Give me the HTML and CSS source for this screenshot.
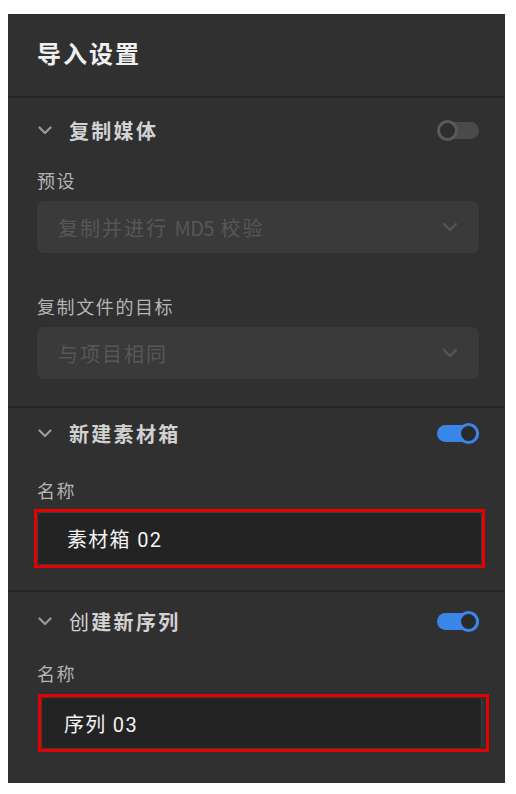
FILE: index.html
```html
<!DOCTYPE html>
<html lang="zh-CN">
<head>
<meta charset="utf-8">
<title>导入设置</title>
<link rel="stylesheet" href="styles.css">
</head>
<body>
<div class="panel">
  <div class="header">导入设置</div>

  <section class="section s1">
    <div class="title-row">
      <svg class="chev" width="14" height="9" viewBox="0 0 14 9"><polyline points="1.5,1.5 7,7 12.5,1.5" fill="none" stroke="#9a9a9a" stroke-width="2.2" stroke-linecap="round" stroke-linejoin="round"/></svg>
      <span class="title">复制媒体</span>
      <span class="toggle off"><span class="knob"></span></span>
    </div>
    <div class="label l1">预设</div>
    <div class="select">
      <span class="sel-text">复制并进行 <span class="latin">MD5</span> 校验</span>
      <svg class="sel-chev" width="16" height="10" viewBox="0 0 16 10"><polyline points="2,2 8,8 14,2" fill="none" stroke="#555555" stroke-width="2.4" stroke-linecap="round" stroke-linejoin="round"/></svg>
    </div>
    <div class="label l2">复制文件的目标</div>
    <div class="select">
      <span class="sel-text">与项目相同</span>
      <svg class="sel-chev" width="16" height="10" viewBox="0 0 16 10"><polyline points="2,2 8,8 14,2" fill="none" stroke="#555555" stroke-width="2.4" stroke-linecap="round" stroke-linejoin="round"/></svg>
    </div>
  </section>

  <section class="section s2">
    <div class="title-row">
      <svg class="chev" width="14" height="9" viewBox="0 0 14 9"><polyline points="1.5,1.5 7,7 12.5,1.5" fill="none" stroke="#9a9a9a" stroke-width="2.2" stroke-linecap="round" stroke-linejoin="round"/></svg>
      <span class="title">新建素材箱</span>
      <span class="toggle on"><span class="knob"></span></span>
    </div>
    <div class="label l3">名称</div>
    <div class="highlight h1">
      <div class="input">素材箱 02</div>
    </div>
  </section>

  <section class="section s3">
    <div class="title-row">
      <svg class="chev" width="14" height="9" viewBox="0 0 14 9"><polyline points="1.5,1.5 7,7 12.5,1.5" fill="none" stroke="#9a9a9a" stroke-width="2.2" stroke-linecap="round" stroke-linejoin="round"/></svg>
      <span class="title"><span class="light">创</span>建新序列</span>
      <span class="toggle on"><span class="knob"></span></span>
    </div>
    <div class="label l4">名称</div>
    <div class="highlight h2">
      <div class="input">序列 03</div>
    </div>
  </section>
</div>
</body>
</html>
```

FILE: styles.css
```css
* { box-sizing: border-box; }
html, body { background: #ffffff; }
body {
  margin: 0;
  padding: 14px 11px 11px 8px;
  font-family: "Noto Sans CJK SC", "Noto Sans", "Liberation Sans", sans-serif;
}
.panel {
  width: 497px;
  height: 769px;
  background: #303030;
  display: flex;
  flex-direction: column;
  overflow: hidden;
}
.header {
  height: 84px;
  padding-left: 29px;
  padding-bottom: 5px;
  display: flex;
  align-items: center;
  color: #f0f0f0;
  font-size: 24px;
  font-weight: 700;
  letter-spacing: 2px;
  border-bottom: 2px solid #252525;
}
.section {
  padding: 0 26px 0 29px;
  display: flex;
  flex-direction: column;
  border-bottom: 2px solid #262626;
}
.s1 { padding-top: 16px; padding-bottom: 27px; }
.s2 { padding-top: 9px; padding-bottom: 22px; }
.s3 { padding-top: 13px; border-bottom: none; flex: 1; }

.title-row {
  height: 32px;
  display: flex;
  align-items: center;
}
.chev { margin-left: 1px; margin-right: 17px; flex: none; }
.title {
  color: #d2d2d2;
  font-size: 20px;
  font-weight: 700;
  letter-spacing: 2.3px;
  flex: 1;
}
.light { font-weight: 400; }

.toggle {
  position: relative;
  width: 42px;
  height: 21px;
  flex: none;
}
.toggle::before {
  content: "";
  position: absolute;
  left: 3px;
  right: 0;
  top: 2px;
  bottom: 2px;
  border-radius: 9px;
}
.toggle .knob {
  position: absolute;
  top: 0;
  width: 21px;
  height: 21px;
  border-radius: 50%;
  background: #2e2e2e;
}
.toggle.off::before { background: #4a4a4a; left: 8px; }
.toggle.off .knob { left: 0; border: 3px solid #5a5a5a; }
.toggle.on::before { background: #3a86e8; left: 0; }
.toggle.on .knob { right: 0; border: 3px solid #3a86e8; background: #2a2a2a; }

.label {
  color: #b4b4b4;
  font-size: 18px;
  line-height: 24px;
  letter-spacing: 1.6px;
}
.l1 { margin-top: 22px; }
.l2 { margin-top: 41px; }
.l3 { margin-top: 29px; }
.l4 { margin-top: 24px; }

.select {
  margin-top: 9px;
  height: 52px;
  border-radius: 7px;
  background: #3a3a3a;
  display: flex;
  align-items: center;
  padding: 0 21px 0 21px;
}
.sel-text {
  flex: 1;
  color: #575757;
  font-size: 20px;
  letter-spacing: 2px;
}
.latin { letter-spacing: -0.5px; }
.sel-chev { flex: none; }

.highlight {
  border: 3px solid #e60000;
  width: 451px;
}
.h1 { margin-top: 7px; margin-left: -3px; height: 59px; }
.h2 { margin-top: 9px; margin-left: 1px; height: 58px; }
.input {
  height: 100%;
  background: #232323;
  border: 1px solid #3d3d3d;
  border-radius: 4px;
  display: flex;
  align-items: center;
  padding-left: 29px;
  color: #f2f2f2;
  font-family: Roboto, "Noto Sans CJK SC", sans-serif;
  font-size: 20px;
  letter-spacing: 1.3px;
}
.h2 .input { padding-left: 22px; margin-right: 4px; }
```
